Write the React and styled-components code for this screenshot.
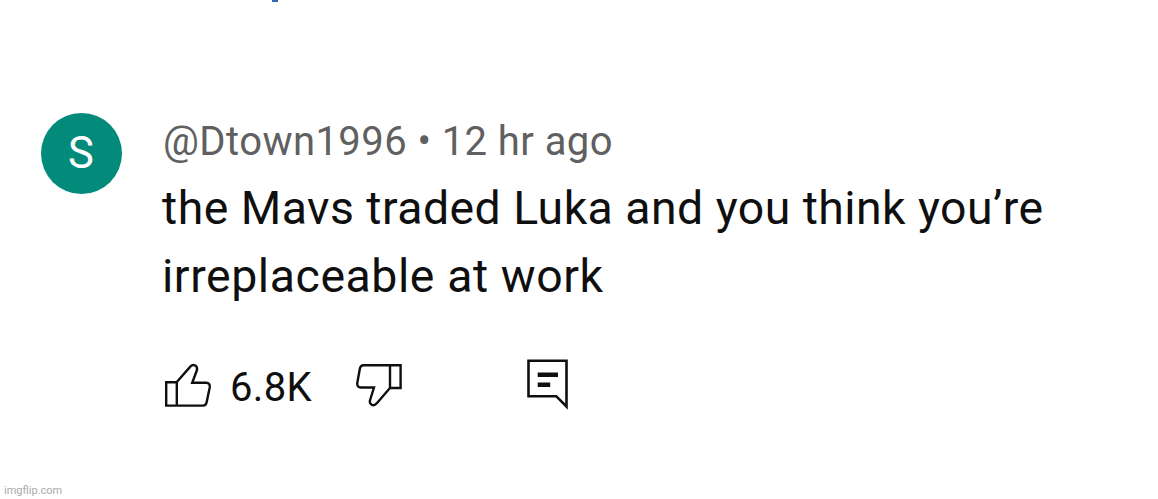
import styled, { createGlobalStyle } from "styled-components";

export default function App() {
    return (
        <Page>
            <GlobalStyle />
            <LinkEdge />
            <Comment>
                <Avatar>S</Avatar>
                <Content>
                    <Author>@Dtown1996 • 12 hr ago</Author>
                    <Message>
                        <Line $spacing="0.46px">
                            the Mavs traded Luka and you think you’re
                        </Line>
                        <Line $spacing="0.58px">irreplaceable at work</Line>
                    </Message>
                    <Actions>
                        <ThumbUp />
                        <LikeCount>6.8K</LikeCount>
                        <ThumbDown />
                        <ReplyIcon />
                    </Actions>
                </Content>
            </Comment>
            <Watermark>imgflip.com</Watermark>
        </Page>
    );
}

function ThumbUp() {
    return (
        <Icon width="50" height="46" viewBox="0 0 50 46">
            <path d="M4.2 21.3H14.8V44.6H4.2ZM14.8 21L28.3 5.6C31.5 2.2 36 5 34.9 9.3L30.2 21.7H44Q48.5 22 47.7 26.5L44.7 41Q44 44.6 41 44.6H14.8" />
        </Icon>
    );
}

function ThumbDown() {
    return (
        <DislikeIcon width="48" height="46" viewBox="0 0 48 46">
            <path d="M45.6 4.2H35V27H45.6ZM35 27L21.8 42.3C18.3 46.3 13.8 43.1 15.1 39L19 26.5H6Q1.7 26.2 2.3 21.8L4.9 7.5Q5.6 4.2 8.7 4.2H35" />
        </DislikeIcon>
    );
}

function ReplyIcon() {
    return (
        <CommentIcon width="44" height="52" viewBox="0 0 44 52">
            <path d="M3.5 2.7H41.5V48.5L31.2 38.2H3.5Z" />
            <CommentLines d="M12.7 16.7H33M12.7 26.8H25.2" />
        </CommentIcon>
    );
}

const GlobalStyle = createGlobalStyle`
    * {
        box-sizing: border-box;
    }

    body {
        margin: 0;
        background-color: #ffffff;
    }
`;

const Page = styled.main`
    width: 1158px;
    height: 499px;
    display: flex;
    flex-direction: column;
    overflow: hidden;
    background-color: #ffffff;
    font-family: Roboto, sans-serif;
`;

const LinkEdge = styled.div`
    width: 6px;
    height: 2px;
    margin-left: 272px;
    background-color: #3568aa;
`;

const Comment = styled.article`
    display: flex;
    align-items: flex-start;
    padding: 110px 0 0 40px;
`;

const Avatar = styled.div`
    width: 81px;
    height: 81px;
    margin: 0.5px;
    border-radius: 50%;
    display: flex;
    align-items: center;
    justify-content: center;
    background-color: #028a7a;
    color: #ffffff;
    font-size: 43.5px;
    line-height: 82px;
    padding-top: 2px;
`;

const Content = styled.div`
    margin-left: 40px;
`;

const Author = styled.div`
    height: 62px;
    padding-left: 1px;
    line-height: 60px;
    color: #606060;
    font-size: 40px;
    letter-spacing: 0.43px;
    white-space: nowrap;
`;

const Message = styled.p`
    margin: 0;
    color: #0f0f0f;
    font-size: 46.4px;
    line-height: 68px;
    white-space: nowrap;
`;

const Line = styled.span`
    display: block;
    letter-spacing: ${({ $spacing }) => $spacing};
`;

const Actions = styled.div`
    height: 54px;
    margin-top: 47px;
    display: flex;
    align-items: center;
`;

const Icon = styled.svg`
    flex: none;
    fill: none;
    stroke: #0f0f0f;
    stroke-width: 2.4;
`;

const LikeCount = styled.span`
    width: 82px;
    margin-left: 18px;
    padding-top: 6px;
    color: #0f0f0f;
    font-size: 40px;
    letter-spacing: 0.3px;
`;

const DislikeIcon = styled(Icon)`
    margin-left: 43px;
`;

const CommentIcon = styled(Icon)`
    margin-left: 122px;
    stroke-width: 2.6;
`;

const CommentLines = styled.path`
    stroke-width: 4.4;
`;

const Watermark = styled.footer`
    margin-top: auto;
    padding: 0 0 1px 4px;
    color: #aaaaaa;
    font-size: 11px;
    line-height: 14px;
`;
